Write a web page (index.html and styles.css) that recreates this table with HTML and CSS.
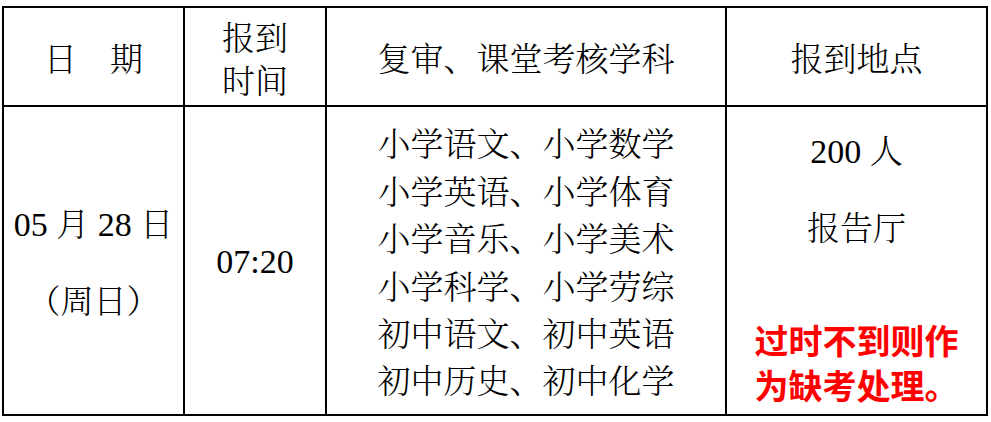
FILE: index.html
```html
<!DOCTYPE html>
<html lang="zh-CN">
<head>
<meta charset="utf-8">
<title>报到安排</title>
<link rel="stylesheet" href="styles.css">
</head>
<body>
<table class="sched">
  <colgroup>
    <col class="c1"><col class="c2"><col class="c3"><col class="c4">
  </colgroup>
  <thead>
    <tr class="head">
      <th>日　期</th>
      <th class="two">报到<br>时间</th>
      <th>复审、课堂考核学科</th>
      <th>报到地点</th>
    </tr>
  </thead>
  <tbody>
    <tr class="body">
      <td class="date"><span class="num">05</span> 月 <span class="num">28</span> 日<br>（周日）</td>
      <td class="time"><span class="num">07:20</span></td>
      <td class="subjects">小学语文、小学数学<br>小学英语、小学体育<br>小学音乐、小学美术<br>小学科学、小学劳综<br>初中语文、初中英语<br>初中历史、初中化学</td>
      <td class="place">
        <div class="loc"><span class="num">200</span> 人<br>报告厅</div>
        <div class="warn">过时不到则作<br>为缺考处理。</div>
      </td>
    </tr>
  </tbody>
</table>
</body>
</html>
```
FILE: styles.css
```css
html, body {
  margin: 0;
  padding: 0;
  background: #fff;
}
body {
  padding: 6px 0 0 2px;
  font-family: "Noto Serif CJK SC", "Noto Sans CJK SC", serif;
  font-weight: 300;
  font-size: 33px;
  color: #000;
}
.sched {
  border-collapse: collapse;
  table-layout: fixed;
  width: 984px;
}
.c1 { width: 181px; }
.c2 { width: 142px; }
.c3 { width: 400px; }
.c4 { width: 261px; }
.sched th, .sched td {
  border: 2px solid #000;
  padding: 0;
  text-align: center;
  vertical-align: middle;
  font-weight: 300;
}
.head { height: 99px; }
.head th { line-height: 40px; }
.head .two { line-height: 43px; }
.body { height: 309px; }
.num {
  font-family: "Liberation Serif", "Times New Roman", serif;
  font-weight: 400;
  font-size: 34px;
}
.date { line-height: 74px; }
.time { line-height: 40px; }
.subjects { line-height: 47.4px; padding-bottom: 4px; }
.place {
  vertical-align: top;
}
.loc {
  margin-top: -2px;
  line-height: 74px;
}
.warn {
  margin-top: 54px;
  line-height: 45px;
  color: #ff0000;
  font-family: "Noto Sans CJK SC", sans-serif;
  font-weight: 700;
  font-size: 34px;
}
```
